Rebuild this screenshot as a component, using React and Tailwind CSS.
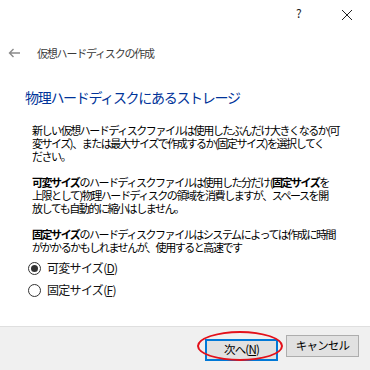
import React from 'react'

const jp = { fontFamily: '"Noto Sans CJK JP", "Noto Sans", sans-serif' }

const para1 = [
  '新しい仮想ハードディスクファイルは使用したぶんだけ大きくなるか(可',
  '変サイズ)、または最大サイズで作成するか(固定サイズ)を選択してく',
  'ださい。',
]

const Radio = ({ checked, label, hot }) => (
  <div className="flex items-center h-[22px] pl-[28px]">
    <span className="w-[13px] h-[13px] rounded-full border border-[#333] bg-white flex items-center justify-center">
      {checked && <span className="w-[7px] h-[7px] rounded-full bg-[#333]" />}
    </span>
    <span className="ml-[6px] text-[12px] text-[#111] tracking-[-0.7px] leading-none">
      {label}(<span className="underline">{hot}</span>)
    </span>
  </div>
)

export default function App() {
  return (
    <div className="w-[370px] h-[370px] bg-white flex flex-col overflow-hidden" style={jp}>
      {/* title bar */}
      <div className="h-[30px] relative shrink-0">
        <span className="absolute left-[296px] top-[7px] text-[12px] text-[#222] leading-none">?</span>
        <svg className="absolute left-[341px] top-[9px]" width="12" height="12" viewBox="0 0 12 12">
          <path d="M1 1 L11 11 M11 1 L1 11" stroke="#222" strokeWidth="1" fill="none" />
        </svg>
      </div>

      {/* wizard header */}
      <div className="mt-[15px] h-[16px] flex items-center shrink-0">
        <svg className="ml-[8px]" width="13" height="10" viewBox="0 0 13 10">
          <path d="M12 5 H1.5 M5.5 1 L1.5 5 L5.5 9" stroke="#8a8a8a" strokeWidth="1.4" fill="none" />
        </svg>
        <span className="ml-[16px] text-[11px] tracking-[-1.2px] text-[#3a3a3a] leading-none">仮想ハードディスクの作成</span>
      </div>

      <div className="mt-[26px] h-[20px] pl-[25px] flex items-center shrink-0">
        <span className="text-[14px] tracking-[-1.3px] text-[#003399] leading-none">物理ハードディスクにあるストレージ</span>
      </div>

      {/* description */}
      <div className="mt-[17px] pl-[32px] text-[11px] tracking-[-1.45px] leading-[13px] text-black whitespace-nowrap shrink-0">
        {para1.map((l, i) => (
          <div key={i}>{l}</div>
        ))}
        <div className="mt-[13px]">
          <b className="font-bold">可変サイズ</b>のハードディスクファイルは使用した分だけ(<b className="font-bold">固定サイズ</b>を
        </div>
        <div>上限として)物理ハードディスクの領域を消費しますが、スペースを開</div>
        <div>放しても自動的に縮小はしません。</div>
        <div className="mt-[13px]">
          <b className="font-bold">固定サイズ</b>のハードディスクファイルはシステムによっては作成に時間
        </div>
        <div>がかかるかもしれませんが、使用すると高速です</div>
      </div>

      <div className="mt-[3px] shrink-0">
        <Radio checked label="可変サイズ" hot="D" />
        <Radio label="固定サイズ" hot="F" />
      </div>

      <div className="flex-1" />

      {/* footer */}
      <div className="h-[44px] shrink-0 bg-[#f0f0f0] border-t border-[#dfdfdf] flex justify-end gap-[8px] pt-[8px] pr-[11px]">
        <div className="relative">
          <button className="w-[73px] h-[22px] bg-[#e1e1e1] border-2 border-[#0078d7] text-[11.5px] tracking-[-0.8px] text-black leading-none">
            次へ(<span className="underline">N</span>)
          </button>
          <div className="absolute left-[-8px] top-[-4px] w-[86px] h-[30px] rounded-[50%] border-2 border-[#e3101a] pointer-events-none" />
        </div>
        <button className="w-[73px] h-[22px] bg-[#e1e1e1] border border-[#adadad] text-[11.5px] tracking-[-0.8px] text-black leading-none">
          キャンセル
        </button>
      </div>
    </div>
  )
}
